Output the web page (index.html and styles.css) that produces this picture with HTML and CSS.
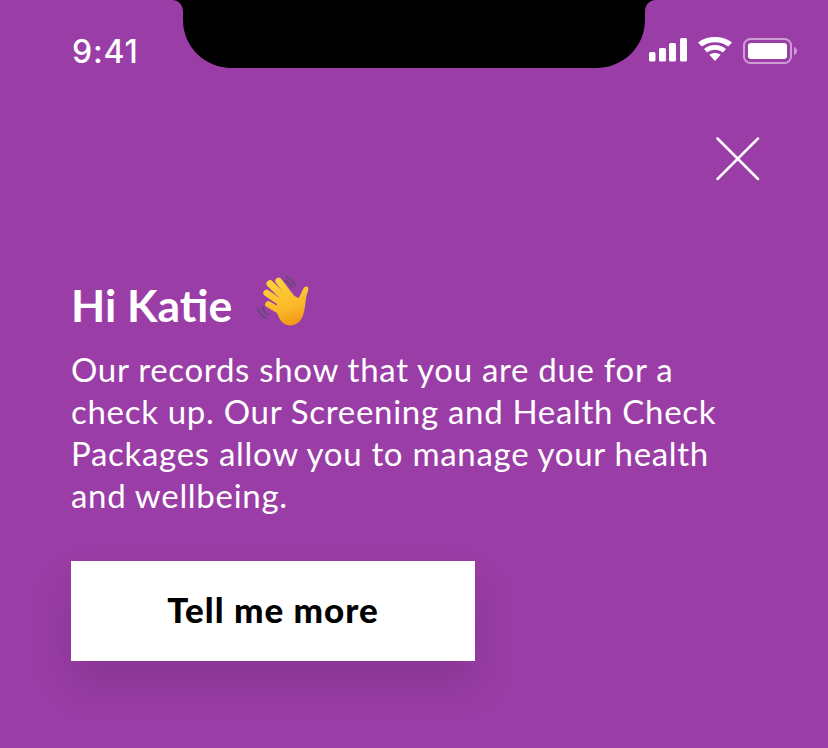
FILE: index.html
```html
<!DOCTYPE html>
<html lang="en">
<head>
<meta charset="utf-8">
<title>Health check reminder</title>
<link rel="stylesheet" href="styles.css">
</head>
<body>
<div class="screen">
  <svg class="notch" width="828" height="68" viewBox="0 0 828 68"><path d="M172 0C179 0 183 5 183 12V20C183 47 205 68 232 68H596C623 68 645 47 645 20V12C645 5 649 0 656 0Z" fill="#000"/></svg>
  <header class="status">
    <span class="time">9:41</span>
    <div class="status-icons">
      <svg class="signal" width="38" height="24" viewBox="0 0 38 24"><rect x="0" y="14" width="6.5" height="9.5" rx="1.6"/><rect x="10" y="10" width="7" height="13.5" rx="1.6"/><rect x="20" y="5" width="7" height="18.5" rx="1.6"/><rect x="31" y="0" width="7" height="23.5" rx="1.6"/></svg>
      <svg class="wifi" width="34" height="24" viewBox="0 0 34 24"><path d="M17 24l-5.600-6.200c3.200-2.500 8-2.500 11.200 0Z"/><path d="M9.200 15.400 6 12c6-5.200 16-5.200 22 0l-3.200 3.400c-4.400-3.600-11.200-3.600-15.600 0Z"/><path d="M3.800 9.600 0 5.500c9.400-7.300 24.600-7.300 34 0l-3.800 4.100C22.700 3.700 11.300 3.700 3.800 9.600Z"/></svg>
      <svg class="battery" width="54" height="26" viewBox="0 0 54 26"><rect x="1" y="1" width="47" height="24" rx="6.500" class="battery-case"/><rect x="5" y="5" width="39" height="16" rx="3"/><path class="battery-nub" d="M51 9c1.700.5 3 2 3 4s-1.300 3.500-3 4Z"/></svg>
    </div>
  </header>
  <div class="close-row">
    <svg width="44" height="44" viewBox="0 0 44 44" class="close"><path d="M1.500 1.500 42 42M42 1.500 1.500 42"/></svg>
  </div>
  <main class="content">
    <h1 class="title"><span>Hi Katie</span>
      <svg class="wave" width="66" height="62" viewBox="0 0 198 186">
        <defs>
          <linearGradient id="skin" gradientUnits="userSpaceOnUse" x1="80" y1="30" x2="125" y2="170">
            <stop offset="0" stop-color="#fdd13a"/>
            <stop offset=".6" stop-color="#fbb828"/>
            <stop offset="1" stop-color="#ef9415"/>
          </linearGradient>
        </defs>
        <path class="wave-lines" d="M103 20c12 4 22 14 28 28M99 32c8 3 15 9 20 18M18 116c3 11 11 22 22 28M30 112c3 8 8 16 16 21"/>
        <path class="wave-fingers" stroke-width="20" d="M80 33 122 88"/>
        <path class="wave-fingers" stroke-width="21" d="M54 41 108 94"/>
        <path class="wave-fingers" stroke-width="20" d="M44 69 98 106"/>
        <path class="wave-fingers" stroke-width="19" d="M49 103 90 127"/>
        <path fill="url(#skin)" d="M84 94 122 76 140 84C148 72 149 60 158 51 166 46 172 53 168 64 158 86 162 118 151 141 140 166 112 173 94 160 79 148 76 126 68 112Z"/>
      </svg>
    </h1>
    <p class="message">Our records show that you are due for a check up. Our Screening and Health Check Packages allow you to manage your health and wellbeing.</p>
    <button class="cta" type="button">Tell me more</button>
  </main>
</div>
</body>
</html>
```
FILE: styles.css
```css
* { box-sizing: border-box; }
html, body { margin: 0; padding: 0; }
body { width: 828px; height: 748px; overflow: hidden; background: #9a3da6; }
.screen { position: relative; width: 828px; height: 748px; background: #9a3da6; color: #fff; font-family: Lato, "Open Sans", sans-serif; }
.notch { position: absolute; top: 0; left: 0; }
.status { display: flex; justify-content: space-between; align-items: flex-start; height: 137px; padding: 33px 31px 0 72px; }
.time { font-family: Inter, sans-serif; font-size: 32px; font-weight: 500; line-height: 37px; letter-spacing: .8px; }
.status-icons { display: flex; align-items: flex-start; gap: 11px; padding-top: 5px; }
.status-icons svg { fill: #fff; display: block; }
.wifi { margin-top: -1px; }
.battery-case { fill: none; stroke: #fff; stroke-opacity: .5; stroke-width: 2; }
.battery-nub { fill-opacity: .5; }
.close-row { display: flex; justify-content: flex-end; padding-right: 68px; height: 135px; }
.close { fill: none; stroke: #fff; stroke-width: 2.500; stroke-linecap: round; }
.content { padding-left: 71px; }
.title { display: flex; align-items: center; margin: 0; height: 66px; font-size: 44.500px; font-weight: 700; line-height: 66px; }
.wave { margin: -8px 0 0 20px; }
.wave-lines { fill: none; stroke: #5b4d6e; stroke-width: 5; stroke-linecap: round; }
.wave-fingers { fill: none; stroke: url(#skin); stroke-linecap: round; }
.message { margin: 10px 0 0; width: 660px; font-size: 33px; line-height: 42px; letter-spacing: .7px; }
.cta { display: block; margin-top: 45px; padding: 0 0 5px; width: 404px; height: 100px; border: 0; background: #fff; color: #000; font-family: Lato, sans-serif; font-size: 35px; font-weight: 900; letter-spacing: 1px; box-shadow: 0 22px 44px rgba(0,0,0,.12); }
```
